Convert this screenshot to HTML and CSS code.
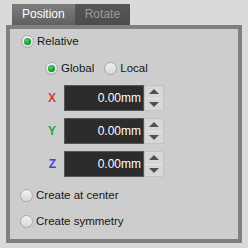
FILE: index.html
```html
<!DOCTYPE html>
<html lang="en">
<head>
    <meta charset="UTF-8">
    <title>Position</title>
    <link rel="stylesheet" href="styles.css">
</head>
<body>
    <div class="tabs">
        <div class="tab active">Position</div>
        <div class="tab">Rotate</div>
    </div>
    <div class="panel">
        <label class="option row-relative">
            <span class="radio checked"></span>Relative
        </label>
        <div class="row-space">
            <label class="option">
                <span class="radio checked"></span>Global
            </label>
            <label class="option">
                <span class="radio"></span>Local
            </label>
        </div>

        <div class="axis-row first">
            <span class="axis x">X</span>
            <div class="value">0.00mm</div>
            <div class="spinner"><span class="up"></span><span class="down"></span></div>
        </div>
        <div class="axis-row">
            <span class="axis y">Y</span>
            <div class="value">0.00mm</div>
            <div class="spinner"><span class="up"></span><span class="down"></span></div>
        </div>
        <div class="axis-row">
            <span class="axis z">Z</span>
            <div class="value">0.00mm</div>
            <div class="spinner"><span class="up"></span><span class="down"></span></div>
        </div>

        <label class="option row-center">
            <span class="radio"></span>Create at center
        </label>
        <label class="option row-sym">
            <span class="radio"></span>Create symmetry
        </label>
    </div>
</body>
</html>
```

FILE: styles.css
```css
body {
    margin: 0;
    width: 248px;
    height: 248px;
    background: #dadada;
    font-family: 'Liberation Sans', Arial, sans-serif;
    font-size: 11.5px;
    color: #151515;
}

.tabs {
    display: flex;
    margin: 4px 0 0 12px;
    height: 21px;
}

.tab {
    padding: 0 10px;
    font-size: 12px;
    line-height: 21px;
    color: #9a9a9a;
    background: linear-gradient(#575757, #4c4c4c);
}

.tab.active {
    color: #ffffff;
    background: linear-gradient(#7e7e7e, #606060);
}

.panel {
    margin: 0 6px;
    height: 218px;
    box-sizing: border-box;
    border: 4px solid #808080;
    background: #cdcdcd;
    display: flex;
    flex-direction: column;
    align-items: flex-start;
}

.option {
    display: flex;
    align-items: center;
    height: 16px;
    line-height: 16px;
}

.radio {
    width: 11px;
    height: 11px;
    border: 1px solid #a9a9a9;
    border-radius: 50%;
    background: linear-gradient(#f0f0f0, #d9d9d9);
    margin-right: 3px;
    display: flex;
    align-items: center;
    justify-content: center;
}

.radio.checked::after {
    content: '';
    width: 7px;
    height: 7px;
    border-radius: 50%;
    background: radial-gradient(circle at 40% 35%, #4fd66b, #108a2c 70%);
}

.row-relative {
    margin: 4px 0 0 11px;
}

.row-space {
    display: flex;
    gap: 10px;
    margin: 11px 0 0 35px;
}

.axis-row {
    display: flex;
    align-items: center;
    margin-top: 7px;
}

.axis-row.first {
    margin-top: 9px;
}

.axis {
    width: 46px;
    padding-right: 8px;
    text-align: right;
    font-size: 12px;
    font-weight: bold;
}

.axis.x { color: #e23a2c; }
.axis.y { color: #2aa53a; }
.axis.z { color: #3d44d8; }

.value {
    width: 80px;
    height: 26px;
    box-sizing: border-box;
    border: 1px solid #555555;
    background: #2c2c2c;
    color: #ffffff;
    font-size: 12px;
    line-height: 24px;
    text-align: right;
    padding-right: 2px;
}

.spinner {
    width: 20px;
    height: 26px;
    box-sizing: border-box;
    border: 1px solid #c2c2c2;
    background: #d7d7d7;
    display: flex;
    flex-direction: column;
}

.spinner span {
    flex: 1;
    display: flex;
    align-items: center;
    justify-content: center;
}

.spinner .up {
    border-bottom: 1px solid #e4e4e4;
}

.spinner .up::after {
    content: '';
    border-left: 5px solid transparent;
    border-right: 5px solid transparent;
    border-bottom: 5px solid #505050;
}

.spinner .down::after {
    content: '';
    border-left: 5px solid transparent;
    border-right: 5px solid transparent;
    border-top: 5px solid #505050;
}

.row-center {
    margin: 10px 0 0 10px;
}

.row-sym {
    margin: 10px 0 0 10px;
}
```
